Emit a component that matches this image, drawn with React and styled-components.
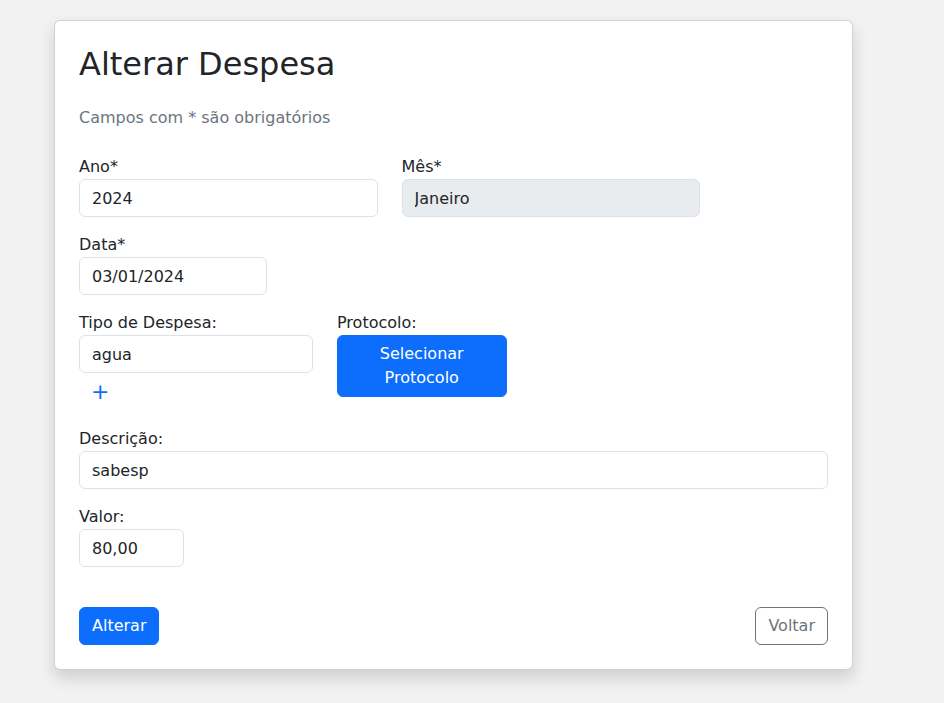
import React from "react";
import styled, { createGlobalStyle } from "styled-components";

const GlobalStyle = createGlobalStyle`
  body {
    margin: 0;
    background: #f2f2f2;
    font-family: "DejaVu Sans", "Noto Sans", sans-serif;
    font-size: 16px;
    line-height: 24px;
    color: #212529;
  }
  * {
    box-sizing: border-box;
  }
`;

const Page = styled.div`
  padding: 20px 0 34px 54px;
`;

const Card = styled.div`
  width: 799px;
  background: #fff;
  border: 1px solid rgba(0, 0, 0, 0.175);
  border-radius: 6px;
  box-shadow: 0 8px 16px rgba(0, 0, 0, 0.15);
  padding: 24px;
`;

const Title = styled.h1`
  margin: 0;
  font-size: 32px;
  font-weight: 400;
  line-height: 1.2;
  color: #212529;
`;

const Hint = styled.p`
  margin: 23px 0 25px;
  color: #6c757d;
`;

const Row = styled.div`
  display: flex;
  gap: 24px;
  align-items: flex-start;
  margin-bottom: 16px;
`;

const Field = styled.div`
  width: ${(p) => p.$width || "100%"};
  flex: 0 0 auto;
`;

const Label = styled.label`
  display: block;
  line-height: 24px;
`;

const Input = styled.input`
  display: block;
  width: 100%;
  height: 38px;
  padding: 6px 12px;
  font-family: inherit;
  font-size: 16px;
  line-height: 24px;
  color: #212529;
  background: ${(p) => (p.disabled ? "#e9ecef" : "#fff")};
  border: 1px solid #dee2e6;
  border-radius: 6px;
  outline: none;
`;

const Button = styled.button`
  display: inline-block;
  padding: 6px 12px;
  font-family: inherit;
  font-size: 16px;
  line-height: 24px;
  border-radius: 6px;
  cursor: pointer;
  color: ${(p) => (p.$outline ? "#6c757d" : "#fff")};
  background: ${(p) => (p.$outline ? "transparent" : "#0d6efd")};
  border: 1px solid ${(p) => (p.$outline ? "#6c757d" : "#0d6efd")};
  width: ${(p) => (p.$block ? "100%" : "auto")};
`;

const AddLink = styled.button`
  display: block;
  height: 38px;
  padding: 6px 12px;
  background: none;
  border: none;
  color: #0d6efd;
  font-family: inherit;
  font-size: 22px;
  line-height: 24px;
  cursor: pointer;
`;

const Footer = styled.div`
  display: flex;
  justify-content: space-between;
  margin-top: 40px;
`;

export default function App() {
  return (
    <>
      <GlobalStyle />
      <Page>
        <Card>
          <Title>Alterar Despesa</Title>
          <Hint>Campos com * são obrigatórios</Hint>

          <Row>
            <Field $width="298.5px">
              <Label>Ano*</Label>
              <Input defaultValue="2024" readOnly />
            </Field>
            <Field $width="298.5px">
              <Label>Mês*</Label>
              <Input defaultValue="Janeiro" disabled />
            </Field>
          </Row>

          <Row>
            <Field $width="188px">
              <Label>Data*</Label>
              <Input defaultValue="03/01/2024" readOnly />
            </Field>
          </Row>

          <Row>
            <Field $width="234px">
              <Label>Tipo de Despesa:</Label>
              <Input defaultValue="agua" readOnly />
              <AddLink>+</AddLink>
            </Field>
            <Field $width="169.5px">
              <Label>Protocolo:</Label>
              <Button $block>Selecionar Protocolo</Button>
            </Field>
          </Row>

          <Row>
            <Field>
              <Label>Descrição:</Label>
              <Input defaultValue="sabesp" readOnly />
            </Field>
          </Row>

          <Row>
            <Field $width="105px">
              <Label>Valor:</Label>
              <Input defaultValue="80,00" readOnly />
            </Field>
          </Row>

          <Footer>
            <Button>Alterar</Button>
            <Button $outline>Voltar</Button>
          </Footer>
        </Card>
      </Page>
    </>
  );
}
